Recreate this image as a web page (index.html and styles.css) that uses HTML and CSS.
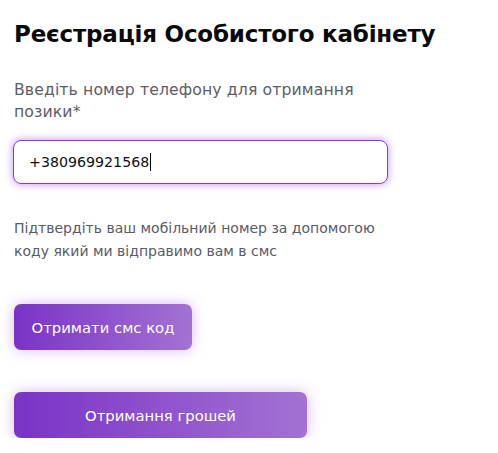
FILE: index.html
```html
<!DOCTYPE html>
<html lang="uk">
<head>
<meta charset="utf-8">
<title>Реєстрація</title>
<link rel="stylesheet" href="styles.css">
</head>
<body>
<main class="page">
  <h1 class="title">Реєстрація Особистого кабінету</h1>
  <p class="label">Введіть номер телефону для отримання позики*</p>
  <div class="field" role="textbox"><span class="value">+380969921568</span><span class="caret"></span></div>
  <p class="hint">Підтвердіть ваш мобільний номер за допомогою коду який ми відправимо вам в смс</p>
  <button class="btn btn-sms" type="button">Отримати смс код</button>
  <button class="btn btn-money" type="button">Отримання грошей</button>
</main>
</body>
</html>
```
FILE: styles.css
```css
html, body {
  margin: 0;
  background: #fff;
}
body {
  font-family: "DejaVu Sans", "Noto Sans", sans-serif;
}
.page {
  display: flex;
  flex-direction: column;
  align-items: flex-start;
  padding: 20px 0 0 14px;
}
.title {
  margin: 0;
  font-size: 23px;
  line-height: 28px;
  font-weight: 700;
  color: #0a0a0a;
  letter-spacing: -0.2px;
}
.label {
  margin: 31px 0 0 0;
  width: 370px;
  font-size: 15.7px;
  line-height: 22px;
  letter-spacing: 0.1px;
  color: #5d5d68;
}
.field {
  margin: 17px 0 0 -1px;
  box-sizing: border-box;
  width: 375px;
  height: 44px;
  border: 1px solid #8a36d8;
  border-radius: 8px;
  box-shadow: 0 0 9px rgba(150, 70, 230, 0.6);
  display: flex;
  align-items: center;
  padding-left: 15px;
  font-size: 14.2px;
  color: #111;
}
.caret {
  display: inline-block;
  width: 1px;
  height: 18px;
  background: #000;
  margin-left: 1px;
}
.hint {
  margin: 33px 0 0 0;
  width: 380px;
  font-size: 14px;
  line-height: 23px;
  color: #5a5a68;
}
.btn {
  border: 0;
  border-radius: 7px;
  height: 46px;
  color: #fff;
  font-family: inherit;
  font-size: 14.8px;
  font-weight: 500;
  background: linear-gradient(90deg, #7a33c6 0%, #a372d3 100%);
  box-shadow: 0 0 14px rgba(170, 100, 230, 0.45);
  cursor: pointer;
}
.btn-sms {
  margin-top: 41px;
  width: 178px;
}
.btn-money {
  margin-top: 42px;
  width: 293px;
}
```
